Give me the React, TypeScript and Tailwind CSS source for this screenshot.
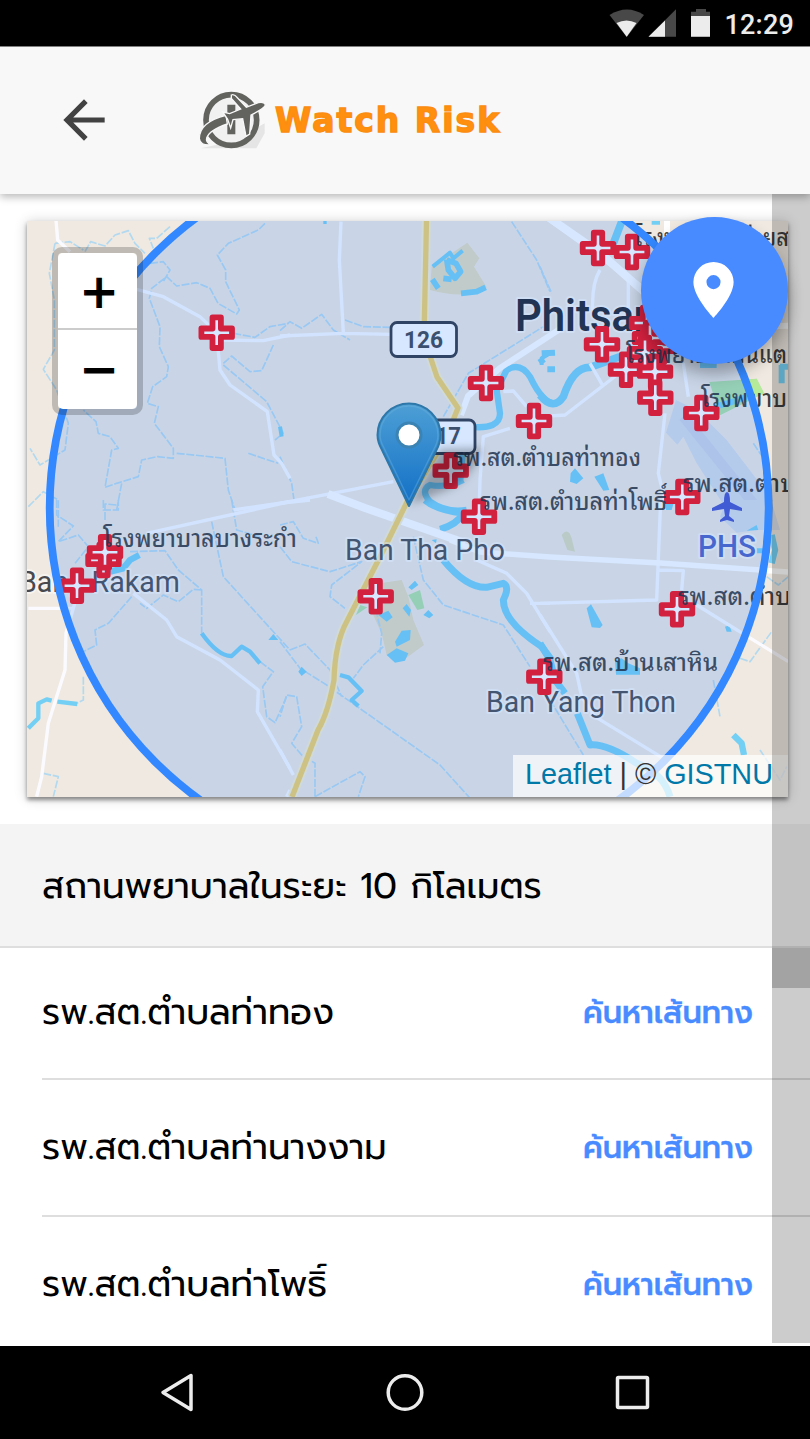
import React from "react";

type Point = [number, number];

const hospitals: Point[] = [
  [216.7, 332.7], [486, 383], [534, 421], [450.7, 470.7], [479, 516.7], [375.7, 596.3], [544.3, 676.7],
  [598, 248], [632, 252], [602, 344.3], [626, 369.7], [647, 323], [660, 347], [650, 338], [645, 353], [655, 371.7],
  [655.3, 397.7], [701.3, 413], [682.3, 497], [677, 609.3], [103.5, 560], [105, 552.3], [77, 585.7],
];

const places = [
  { name: "รพ.สต.ตำบล", x: 678, y: 605, w: 127 },
  { name: "รพ.สต.ตำบล", x: 683, y: 492, w: 127 },
  { name: "รพ.สต.ตำบลท่าทอง", x: 453, y: 466, w: 188 },
  { name: "รพ.สต.ตำบลท่าโพธิ์", x: 480, y: 510, w: 187 },
  { name: "โรงพยาบาลบางระกำ", x: 103, y: 547, w: 194 },
  { name: "รพ.สต.บ้านเสาหิน", x: 543, y: 671, w: 175 },
  { name: "โรงพยาบาลกันแต", x: 626, y: 363, w: 161 },
  { name: "โรงพยาบ", x: 701, y: 407, w: 86 },
  { name: "โรงพยาบาลค่ายส", x: 634, y: 246, w: 155 },
];

function HospitalMark({ at }: { at: Point }) {
  return (
    <path
      transform={`translate(${at[0]} ${at[1]})`}
      d="M-4.2-15.3H4.2V-4.2H15.3V4.2H4.2V15.3H-4.2V4.2H-15.3V-4.2H-4.2Z"
      fill="#fff" stroke="#fb0810" strokeWidth="5.8" strokeLinejoin="round"
    />
  );
}

function MapDrawing() {
  return (
    <svg viewBox="27 221 761 576" className="block h-[576px] w-[761px]" fill="none" strokeLinejoin="round">
      <rect x="27" y="221" width="761" height="576" fill="#efe9e1" />

      {/* parks and airfield */}
      <g transform="translate(280 210) scale(.33333)">
        <path d="M455 170L562 98L598 145L582 170L620 232Q560 270 450 240Z" fill="#e5dcbc" />
      </g>
      <g transform="translate(540 210) scale(.33333)">
        <path d="M508 516L650 506L672 550L540 616Z" fill="#aee2a4" />
        <path d="M612 510L650 506L672 550L630 562Z" fill="#b6ea9b" />
        <path d="M408 570L470 600L560 690L690 860L720 960L600 960L470 760L430 680L412 704L378 668Z" fill="#d6dce8" />
        <path d="M430 620L640 880" stroke="#ccd2e5" strokeWidth="30" />
      </g>
      <g transform="translate(280 500) scale(.33333)">
        <path d="M300 250L365 240L385 290L400 360L432 435L370 480L320 465L305 400L275 335Z" fill="#e5dcbc" />
        <path d="M385 285L420 270L433 325L412 330Z" fill="#aee2a4" />
        <path d="M228 345L240 315L262 322Z" fill="#aee2a4" />
      </g>
      <g transform="translate(540 500) scale(.33333)">
        <path d="M560 0L700 0L650 90L590 98L540 50Z" fill="#d6dce8" />
        <path d="M65 105Q85 80 95 115L105 155L82 150Z" fill="#dcdcba" />
      </g>

      {/* seasonal streams */}
      <g stroke="#b2d9f0" strokeWidth="5" strokeDasharray="24 5">
        <path transform="translate(20 210) scale(.33333)" d="M195 125L212 95L255 108L285 75L325 62L345 100L375 130M450 50L410 85H388L400 115M105 100L150 95L190 120M105 100L88 190L103 270V420L70 478L110 540L145 640L135 720L60 765L30 715M25 890L70 845L115 870V950M735 40L715 60L625 100L592 135L617 180V215L658 300L650 312L594 280L570 235L530 218L470 228L440 200L395 235L388 265L420 350L418 410L445 470L440 500L398 530L382 580L415 590L403 640L460 715V745L412 740L365 750L355 800L290 820L255 832L275 720L295 715L270 680L235 670L228 635L190 600M470 730L550 738L615 745L625 840L645 900M685 730L775 760M610 460L635 438L690 485L725 482L760 405M610 465L740 575L790 670L765 690M640 370L705 382L750 350L805 340M305 820L290 900M255 930V882L290 885M390 160L430 155L450 180L430 215" />
        <path transform="translate(280 210) scale(.33333)" d="M0 362L30 335L65 355L125 313L160 360L210 390M195 330L250 350L330 352M695 35L770 150L810 245M490 620L565 490L790 350M0 740L35 820L42 870" />
        <path transform="translate(20 500) scale(.33333)" d="M250 0V30H295V0M110 0V45L160 78L115 125L175 105L205 140L165 190M330 155L435 152L475 210L545 270V400M545 270L520 268L475 305L430 285L380 325L360 310M335 290L265 370L225 390L230 435L190 455M575 65L610 230L810 450M635 0L650 90L720 110M190 530V600L160 615M720 485L760 515L728 560L740 650L765 668L800 590M70 820L115 830L100 890" />
        <path transform="translate(280 500) scale(.33333)" d="M0 75L40 65L70 115L115 130L108 110M0 140L35 185L150 215L245 185L155 255L150 290L195 325M400 110L430 240L490 315L670 375L750 500M0 425L60 505L140 555L480 795L575 900M30 450L75 432L150 510L185 590M310 440L250 495L220 535M105 890V790L65 765L35 730L65 680L50 590L20 585L0 650M105 890L240 815L255 830L235 890M280 300L305 400L300 460" />
        <path transform="translate(540 210) scale(.33333)" d="M0 170L35 250M640 700L680 760" />
        <path transform="translate(540 500) scale(.33333)" d="M30 600L130 765M520 540L540 650M600 475L630 485L695 395M680 230L715 255L745 230M660 750L720 840L740 800" />
      </g>

      {/* rivers and ponds */}
      <g stroke="#74cff4" strokeWidth="19">
        <path transform="translate(280 210) scale(.33333)" d="M570 650Q660 660 660 610L650 540L680 480Q720 455 750 500Q790 585 830 580M540 820L550 710M550 810Q500 835 450 825Q420 840 450 875Q500 910 560 900" />
        <path transform="translate(540 210) scale(.33333)" d="M0 555Q40 605 70 560Q100 470 150 472L240 440M220 100L245 35" strokeWidth="23" />
        <path transform="translate(280 500) scale(.33333)" d="M435 0Q470 30 550 40Q530 75 480 88M490 180Q560 265 620 262L670 250Q690 260 670 300Q670 365 785 440L815 480" strokeWidth="21" />
        <path transform="translate(540 500) scale(.33333)" d="M0 430L30 480L45 540L75 580M112 640L150 735Q200 730 290 790Q370 820 390 890" strokeWidth="21" />
        <path transform="translate(540 500) scale(.33333)" d="M580 705L605 730L612 765M695 105L705 150L695 190" />
        <path transform="translate(20 500) scale(.33333)" strokeWidth="13" d="M545 400Q595 470 635 468L665 440L690 455L720 490M25 685L55 655V610L80 598L95 602M112 605L172 612" />
        <path transform="translate(20 500) scale(.33333)" d="M270 215L310 205L330 180L358 165" />
        <path transform="translate(280 500) scale(.33333)" strokeWidth="13" d="M180 525L205 532L245 573L215 600L235 618" />
        <path transform="translate(280 210) scale(.33333)" strokeWidth="12" d="M458 170L510 128L520 145L548 122M810 430L785 445V465M130 36H140M0 650L5 680" />
        <path transform="translate(280 210) scale(.33333)" strokeWidth="17" d="M500 148L505 180L525 205L542 185L528 160L500 150M490 205L515 208M457 208L475 235M543 250L590 245L617 232" />
        <path transform="translate(540 210) scale(.33333)" strokeWidth="18" d="M0 445L10 460M5 430L45 428M22 478H45M335 35H360M480 465H530M725 465V520M720 470H745M525 590L580 575L620 560" />
      </g>
      <g fill="#74cff4">
        <path transform="translate(540 210) scale(.33333)" d="M92 790L105 775L130 805L110 822L90 815ZM163 800L190 790L208 840L190 842Z" />
        <path transform="translate(280 500) scale(.33333)" d="M385 262L405 242L415 255L395 270ZM368 325L380 312L393 330L388 350ZM295 345L325 332L338 352L320 365ZM345 425L365 392L392 390L390 420L350 440ZM320 465L350 445L385 460L375 482L345 488ZM430 345L445 330L460 345L448 355ZM55 515L65 500L80 515L65 528ZM455 120L470 118L468 130Z" />
        <path transform="translate(540 500) scale(.33333)" d="M140 325L153 313L188 375L180 384L155 382ZM225 480L245 475L265 490L300 505L300 524L228 524ZM555 380L568 376L575 395L560 395ZM620 92L650 75L655 90ZM650 145H690V160H650ZM375 12L400 12L395 30H378Z" />
        <path transform="translate(20 500) scale(.33333)" d="M745 420L760 402L775 420Z" />
      </g>

      {/* minor roads */}
      <g stroke="#fbfbff" strokeWidth="10">
        <path transform="translate(20 210) scale(.33333)" d="M108 30L113 90L150 125M350 238L430 260L540 320L590 368L610 390L730 392L810 375M590 370L600 480L630 525L742 605L762 735L785 760L810 805M640 900L810 875" />
        <path transform="translate(280 210) scale(.33333)" d="M183 35L178 150L190 370M0 378L190 370L335 373M0 880L340 815M670 545L700 543L740 590M690 655L610 680L600 810L598 880" />
        <path transform="translate(540 210) scale(.33333)" d="M180 180Q155 220 158 300M265 210V330M0 620L75 615L250 480M150 460L190 530M430 460L445 560M375 610L355 790L372 860V900M745 345L680 360" />
        <path transform="translate(20 500) scale(.33333)" d="M380 100L810 5M340 280L440 360L470 410L600 480L715 570L712 635L810 805M25 325L160 325L175 270M160 325L138 400L135 510L85 670L65 830L50 890M800 890L810 870" />
        <path transform="translate(280 500) scale(.33333)" d="M0 750L40 825M0 10L90 0M590 180L680 220L740 280L810 395M750 310H810" />
        <path transform="translate(540 500) scale(.33333)" d="M0 310L350 300L362 0M355 210L430 212L425 270M470 315L745 485M0 345L110 520L125 590L165 650L370 775" />
      </g>

      {/* highways */}
      <g stroke="#fff">
        <path strokeWidth="6" d="M540 212L598 254L655 298M810 325L640 330" />
        <path strokeWidth="8" d="M535 208L600 253L650 297M328 494L365 508L465 543" />
        <path strokeWidth="6" d="M461 415L468 396L500 368L560 329" />
        <path strokeWidth="5.5" d="M450 540L480 552L550 557L660 563L788 572" />
        <path strokeWidth="6" d="M667 221V235" />
      </g>
      <path d="M426.5 221L424 338L437 377L458 408L445 440L407 502L380 557L347 621Q335 643 334 680Q328 713 318 730L292 797" stroke="#f8efce" strokeWidth="9" />
      <path d="M426.5 221L424 338L437 377L458 408L445 440L407 502L380 557L347 621Q335 643 334 680Q328 713 318 730L292 797" stroke="#f4d166" strokeWidth="5.3" />

      {/* route shields */}
      <g fill="#fff" stroke="#30343f" strokeWidth="2.8">
        <rect x="391" y="322.5" width="65.5" height="34" rx="6" />
        <rect x="410" y="420" width="65" height="33.5" rx="6" />
      </g>
      <g fill="#3e424c" className="font-['Roboto'] text-[24px] font-bold">
        <text x="404" y="347.5" textLength="39" lengthAdjust="spacingAndGlyphs">126</text>
        <text x="423" y="444" textLength="38" lengthAdjust="spacingAndGlyphs">117</text>
      </g>

      {/* town names */}
      <g fill="#48494e" stroke="#fff" strokeOpacity=".5" strokeWidth="4" paintOrder="stroke" className="font-['Roboto'] text-[30px]">
        <text x="345" y="560" textLength="160" lengthAdjust="spacingAndGlyphs">Ban Tha Pho</text>
        <text x="486" y="711.5" textLength="190" lengthAdjust="spacingAndGlyphs">Ban Yang Thon</text>
        <text x="19" y="592" textLength="161" lengthAdjust="spacingAndGlyphs">Bang Rakam</text>
        <text x="515" y="331" textLength="222" lengthAdjust="spacingAndGlyphs" fill="#1d2028" className="text-[45px] font-semibold">Phitsanulok</text>
        <text x="698" y="557" textLength="58" lengthAdjust="spacingAndGlyphs" fill="#4d5fc4" className="text-[31px] font-medium">PHS</text>
      </g>
      <path d="M727 492Q730 492 730 502L742 508V511L730 509L729 516L734 520V522L727 520L720 522V520L725 516L724 509L712 511V508L724 502Q724 492 727 492Z" fill="#4450ca" />

      {hospitals.map((at) => <HospitalMark key={at.join()} at={at} />)}
      <g fill="#1c1d22" fillOpacity=".85" className="font-['Noto_Sans_Thai_Looped','Loma','Noto_Sans',sans-serif] text-[24px] font-medium">
        {places.map((p) => (
          <text key={`${p.x}-${p.y}`} x={p.x} y={p.y} textLength={p.w} lengthAdjust="spacingAndGlyphs">{p.name}</text>
        ))}
      </g>

      <circle cx="409.2" cy="507.5" r="359.5" fill="#3388ff" fillOpacity=".2" stroke="#3388ff" strokeWidth="7.8" />

      {/* location pin */}
      <defs>
        <linearGradient id="pin" x1="0" y1="0" x2="0" y2="1">
          <stop offset="0" stopColor="#4d9fd5" />
          <stop offset="1" stopColor="#126fc6" />
        </linearGradient>
        <filter id="soft" x="-30%" y="-30%" width="160%" height="160%"><feGaussianBlur stdDeviation="4" /></filter>
      </defs>
      <path d="M409 505L440 449L482 448Q474 475 452 488Z" fill="#000" fillOpacity=".28" filter="url(#soft)" />
      <path d="M409 506L382 450Q377.500 442 377.500 435A31.500 31.500 0 0 1 440.500 435Q440.500 443 436 451Z" fill="url(#pin)" stroke="#2e77a9" strokeWidth="2" />
      <path d="M409 500L384 448Q380 441 380 435A29 29 0 0 1 438 435Q438 442 434 449Z" stroke="#6fb4dd" strokeOpacity=".4" strokeWidth="1.5" />
      <circle cx="409" cy="435" r="12" fill="#fff" stroke="#3a83b5" strokeWidth="3" />
    </svg>
  );
}

function StatusBar() {
  return (
    <div className="flex h-[47px] shrink-0 items-start justify-end border-b border-[#888] bg-black pr-[16px]">
      <svg viewBox="0 0 106 46" className="mr-[12px] h-[46px] w-[106px]">
        <path d="M4.500 15Q22 4 39 15L21.700 37Z" fill="#484848" transform="translate(-1 0)" />
        <path d="M11 23Q21 18 31 23L21.200 36.700Z" fill="#ececec" transform="translate(-.5 0)" />
        <path d="M42.500 36.700L70 9.300V36.700Z" fill="#484848" />
        <path d="M42.500 36.700L59 20.500V36.700Z" fill="#ececec" />
        <path d="M85 36.700V11.700H90V9H100V11.700H104V36.700Z" fill="#484848" />
        <path d="M85 16H104V36.700H85Z" fill="#ececec" />
      </svg>
      <span className="pt-[9px] font-['Roboto'] text-[27px] leading-[33px] font-medium tracking-[0.2px] text-[#ececec]">12:29</span>
    </div>
  );
}

function Header() {
  return (
    <header className="relative z-10 flex h-[147px] shrink-0 items-center bg-[#f8f8f8] pb-[2px] pl-[53px] shadow-[0_3px_8px_rgba(0,0,0,0.28)]">
      <svg viewBox="0 0 24 24" className="h-[62px] w-[62px]" fill="#424242">
        <path d="M20 11H7.830l5.590-5.590L12 4l-8 8 8 8 1.410-1.410L7.830 13H20v-2z" />
      </svg>
      <svg viewBox="0 0 204 180" className="ml-[83px] h-[60px] w-[68px]">
        <path d="M8 175H175L200 130V100L100 155Z" fill="#ddd" fillOpacity=".7" />
        <circle cx="100" cy="90" r="76" fill="#f1f1f1" stroke="#62625e" strokeWidth="17" />
        <path d="M88 44H112V74H140V82H112V133H88Z" fill="#62625e" />
        <path d="M84 76Q4 96 4 146Q6 168 40 164Q22 158 26 144Q34 120 88 102Z" fill="#62625e" stroke="#f8f8f8" strokeWidth="4" />
        <path d="M100 15Q109 11 119 24L145 52L181 38Q202 35 202 46Q198 56 159 75L155 132L144 139L134 86L105 89L98 114L89 88L74 66L95 71L128 57L100 25Z" fill="#62625e" stroke="#f8f8f8" strokeWidth="4" />
      </svg>
      <span className="ml-[9px] pt-[3px] font-['DejaVu_Sans'] text-[33px] font-bold tracking-[2px] whitespace-nowrap text-[#ff8f0f] [-webkit-text-stroke:1.4px_#fb8d10]">Watch Risk</span>
    </header>
  );
}

const rows = [
  { name: "รพ.สต.ตำบลท่าทอง", box: "h-[132px]" },
  { name: "รพ.สต.ตำบลท่านางงาม", box: "h-[137px]" },
  { name: "รพ.สต.ตำบลท่าโพธิ์", box: "h-[137px]" },
];

export default function App() {
  return (
    <div className="flex h-[1439px] w-[810px] flex-col overflow-hidden bg-white">
      <StatusBar />
      <Header />
      <main className="relative h-[1152px] shrink-0 overflow-hidden bg-white font-['Prompt','Kanit',sans-serif]">
        <div className="relative mx-[27px] mt-[27px] mb-[27px] h-[576px] w-[761px] shadow-[0_3px_4px_rgba(0,0,0,0.4),0_1px_12px_rgba(0,0,0,0.2)]">
          <MapDrawing />
          <div className="absolute top-[26px] left-[25px] flex h-[168px] w-[91px] flex-col overflow-hidden rounded-[10px] border-[6px] border-black/20 bg-clip-padding font-['DejaVu_Sans'] text-[48px] font-bold">
            <button className="flex h-[77px] items-center justify-center rounded-t-[5px] border-b-2 border-[#ccc] bg-white pl-[3px] leading-none">+</button>
            <button className="flex h-[79px] items-center justify-center rounded-b-[5px] bg-white pb-[2px] pl-[3px] leading-none">−</button>
          </div>
          <div className="absolute right-0 bottom-0 flex h-[42px] w-[275px] items-center bg-white/70 pb-[3px] pl-[12px] font-['Liberation_Sans'] text-[28.8px] whitespace-pre text-[#333]">
            <span className="text-[#0078a8]">Leaflet</span> | © <span className="text-[#0078a8]">GISTNU</span>
          </div>
        </div>
        <div className="flex h-[124px] items-center border-b-2 border-[#dedede] bg-[#f4f4f4] pt-[3px] pl-[42px]">
          <h2 className="text-[35.700px] whitespace-nowrap text-black">สถานพยาบาลในระยะ 10 กิโลเมตร</h2>
        </div>
        <div className="pl-[42px]">
          {rows.map((row) => (
            <div key={row.name} className={`flex items-center justify-between border-b-2 border-[#dedede] pr-[57px] ${row.box}`}>
              <span className="text-[35.600px] whitespace-nowrap text-black">{row.name}</span>
              <a className="pt-[2px] text-[30.400px] font-medium whitespace-nowrap text-[#488aff] [-webkit-text-stroke:0.4px_#488aff]">ค้นหาเส้นทาง</a>
            </div>
          ))}
        </div>
        <div className="absolute top-0 right-0 h-[1149px] w-[38px] bg-black/20 pt-[754px]">
          <div className="h-[40px] bg-black/20" />
        </div>
        <button className="absolute top-[23px] left-[641px] flex h-[147px] w-[147px] items-center justify-center rounded-full bg-[#488aff] pr-[3px] pb-px shadow-[0_10px_16px_rgba(0,0,0,0.3)]">
          <svg viewBox="0 0 122 167" className="h-[56px] w-[41px]" fill="#fff">
            <path fillRule="evenodd" d="M61 0A60 60 0 0 0 1 60C1 105 61 167 61 167S121 105 121 60A60 60 0 0 0 61 0ZM61 81A21 21 0 1 1 61 39A21 21 0 0 1 61 81Z" />
          </svg>
        </button>
      </main>
      <nav className="flex h-[93px] shrink-0 items-center bg-black">
        <svg viewBox="0 0 810 93" className="h-[93px] w-[810px]" fill="none" stroke="#ececec" strokeWidth="3.5" strokeLinejoin="round">
          <path d="M191 29.500V63.500L163 46.500Z" />
          <circle cx="405" cy="46.500" r="16.800" />
          <rect x="617.500" y="31.500" width="30" height="30" rx="1" />
        </svg>
      </nav>
    </div>
  );
}
